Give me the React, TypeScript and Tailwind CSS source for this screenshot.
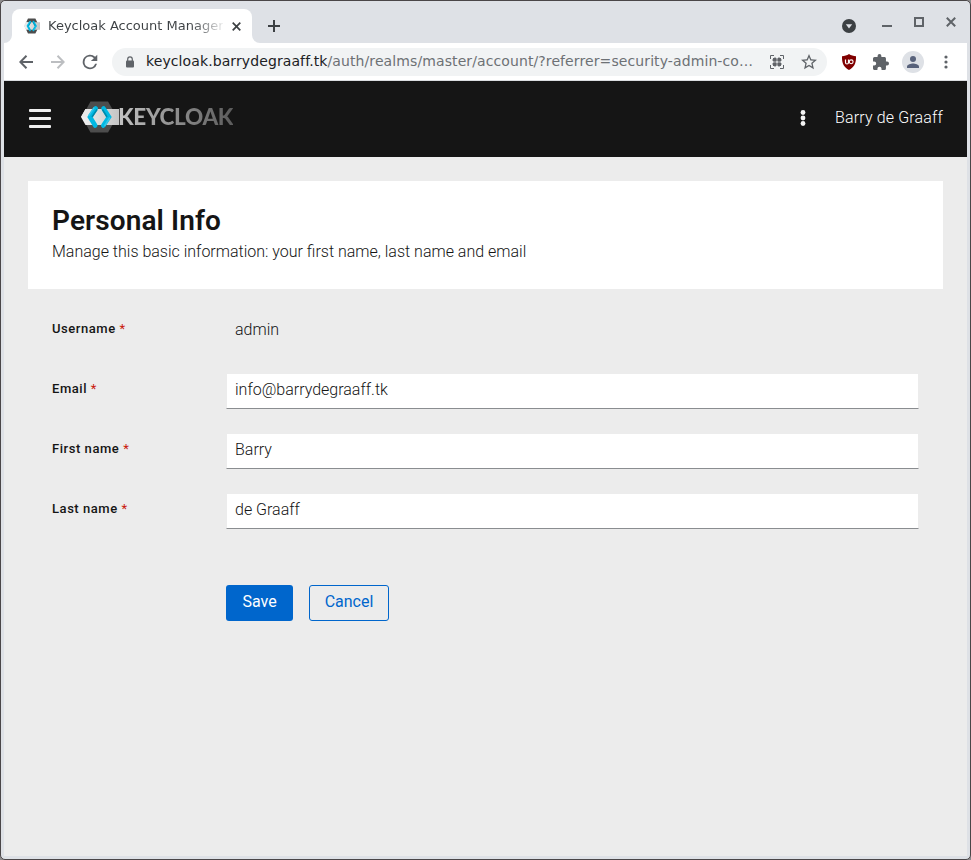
import React from "react";

function KeycloakMark({ className }: { className: string }) {
  return (
    <svg className={className} viewBox="0 0 38 32">
      <defs>
        <linearGradient id="band" x1="0" x2="1">
          <stop offset="0" stopColor="#f2f2f2" />
          <stop offset="1" stopColor="#c4c4c4" />
        </linearGradient>
      </defs>
      <path d="M9.5 0.5h17.5l9 15.5-9 15.5H9.5L1 16z" fill="#4d4d4d" />
      <path d="M4.5 8H38v16H4.5L0 16z" fill="url(#band)" />
      <path d="M4.5 8H12L7.500 16H0z" fill="#e9e9e9" />
      <path d="M14.700 7.500L9 16l5.200 8.500" stroke="#00b8e3" strokeWidth="4.600" strokeLinecap="round" fill="none" />
      <path d="M13.200 6.500L7.500 15" stroke="#33c6e9" strokeWidth="1.500" fill="none" />
      <path d="M16 8.500L11 16" stroke="#008aaa" strokeWidth="1.500" fill="none" />
      <path d="M22.500 7.500L28 16l-5.700 8.500" stroke="#00b8e3" strokeWidth="4.600" strokeLinecap="round" fill="none" />
      <path d="M21.500 8.500L26 16" stroke="#008aaa" strokeWidth="1.500" fill="none" />
      <path d="M29 16.500L23.500 25" stroke="#33c6e9" strokeWidth="1.500" fill="none" />
    </svg>
  );
}

function TabStrip() {
  return (
    <div className="flex h-[42px] items-end bg-[#dee1e6]">
      <svg className="h-2 w-2" viewBox="0 0 8 8"><path d="M8 0v8H0a8 8 0 0 0 8-8z" fill="#fff" /></svg>
      <div className="flex h-[34px] w-[240px] items-center rounded-t-lg bg-white pl-3">
        <KeycloakMark className="h-4 w-4 shrink-0 scale-y-115" />
        <div className="ml-2 w-[175px] whitespace-nowrap bg-linear-to-r from-[#3c4043] from-82% to-[#3c4043]/10 bg-clip-text font-['DejaVu_Sans',sans-serif] text-[13px] leading-5 text-transparent">
          Keycloak Account Manager
        </div>
        <svg className="ml-[9px] h-[9px] w-[9px] shrink-0" viewBox="0 0 9 9"><path d="M.7.7l7.600 7.600M8.300.7L.7 8.300" stroke="#3c4043" strokeWidth="1.700" /></svg>
      </div>
      <svg className="h-2 w-2" viewBox="0 0 8 8"><path d="M0 0v8h8a8 8 0 0 1-8-8z" fill="#fff" /></svg>
      <svg className="mb-[11px] ml-2 h-3 w-3" viewBox="0 0 12 12"><path d="M6 0v12M0 6h12" stroke="#3c4043" strokeWidth="2" /></svg>
      <div className="ml-auto flex h-full">
        <svg className="mt-[18px] h-[14px] w-[14px]" viewBox="0 0 14 14"><circle cx="7" cy="7" r="7" fill="#3c4043" /><path d="M3.800 5.200h6.400L7 9.600z" fill="#dee1e6" /></svg>
        <div className="ml-[26px] mt-[24px] h-[2px] w-[10px] bg-[#5f6368]" />
        <div className="ml-[22px] mt-4 h-[10px] w-[10px] border-2 border-[#5f6368]" />
        <svg className="ml-[22px] mr-[11px] mt-4 h-[10px] w-[10px]" viewBox="0 0 10 10"><path d="M.8.8l8.400 8.400M9.200.8L.8 9.200" stroke="#5f6368" strokeWidth="2" /></svg>
      </div>
    </div>
  );
}

function Toolbar() {
  return (
    <div className="flex h-[37px] items-center bg-white">
      <svg className="ml-[15px] h-[14px] w-[14px]" viewBox="0 0 14 14"><path d="M14 7H1.500M7.500.8L1.300 7l6.200 6.200" stroke="#5f6368" strokeWidth="2" fill="none" /></svg>
      <svg className="ml-[18px] h-[14px] w-[14px]" viewBox="0 0 14 14"><path d="M0 7h12.500M6.500.8L12.700 7l-6.200 6.200" stroke="#bcbec1" strokeWidth="2" fill="none" /></svg>
      <svg className="ml-[13px] h-[24px] w-[24px] p-[2px]" viewBox="1 1 22 22"><path d="M17.650 6.350A8 8 0 1 0 19.730 14h-2.080A6 6 0 1 1 12 6c1.660 0 3.140.69 4.220 1.780L13 11h7V4z" fill="#5f6368" /></svg>
      <div className="ml-[10px] flex h-7 w-[715px] items-center rounded-full bg-[#f1f3f4]">
        <svg className="ml-[14px] h-3 w-2" viewBox="0 0 8 12"><rect y="4.500" width="8" height="7" rx="1" fill="#5f6368" /><path d="M1.700 5V3.200a2.300 2.300 0 0 1 4.600 0V5" stroke="#5f6368" strokeWidth="1.200" fill="none" /></svg>
        <div className="ml-3 w-[611px] whitespace-nowrap font-['DejaVu_Sans',sans-serif] text-[14px] tracking-[0.1px] text-[#6d7175]">
          <span className="text-[#202124]">keycloak.barrydegraaff.tk</span>/auth/realms/master/account/?referrer=security-admin-co…
        </div>
        <svg className="ml-[13px] h-[14px] w-[14px]" viewBox="0 0 14 14"><path d="M.5 4V.5H4M10 .5h3.500V4M13.500 10v3.500H10M4 13.500H.5V10" stroke="#5f6368" fill="none" /><path d="M3 3h3.500v3.500H3zM7.500 3H11v3.500H7.500zM3 7.500h3.500V11H3zM7.500 7.500H11V11H7.500z" fill="#5f6368" /><path d="M2 5h10M2 9h10M5 2v10M9 2v10" stroke="#5f6368" strokeWidth=".8" /></svg>
        <svg className="ml-[17px] h-4 w-4" viewBox="2 2 20 20"><path d="M22 9.240l-7.190-.62L12 2 9.190 8.630 2 9.240l5.460 4.730L5.820 21 12 17.270 18.180 21l-1.630-7.030zM12 15.400l-3.760 2.270 1-4.280-3.320-2.880 4.380-.38L12 6.100l1.710 4.040 4.380.38-3.320 2.880 1 4.280z" fill="#5f6368" /></svg>
      </div>
      <svg className="ml-[15px] h-4 w-[14px]" viewBox="0 0 14 16"><path d="M7 0c2 1.500 4.500 2.100 7 2.200C14.200 9 12.500 12.800 7 16 1.500 12.800-.2 9 0 2.200 2.500 2.100 5 1.500 7 0z" fill="#800000" /><path d="M3.500 5.500v3q0 1.500 1.500 1.500t1.500-1.500v-3" stroke="#fff" strokeWidth="1.200" fill="none" /><circle cx="9.200" cy="7.800" r="1.900" stroke="#fff" strokeWidth="1.100" fill="none" /></svg>
      <svg className="ml-[17px] h-4 w-4" viewBox="2 1 21 21"><path d="M20.500 11H19V7c0-1.100-.9-2-2-2h-4V3.500a2.500 2.500 0 0 0-5 0V5H4a2 2 0 0 0-2 2v3.800h1.500a2.700 2.700 0 0 1 0 5.400H2V20c0 1.100.9 2 2 2h3.800v-1.500a2.700 2.700 0 0 1 5.400 0V22H17a2 2 0 0 0 2-2v-4h1.500a2.500 2.500 0 0 0 0-5z" fill="#5f6368" /></svg>
      <svg className="ml-[13px] h-[22px] w-[22px]" viewBox="0 0 22 22"><circle cx="11" cy="11" r="11" fill="#dee1e6" /><circle cx="11" cy="8" r="3" fill="#58627b" /><path d="M5 17v-1.500C5 13.500 9 12.500 11 12.500s6 1 6 3V17z" fill="#58627b" /></svg>
      <svg className="ml-5 h-[14px] w-1" viewBox="0 0 4 14"><g fill="#5f6368"><circle cx="2" cy="2" r="1.600" /><circle cx="2" cy="7" r="1.600" /><circle cx="2" cy="12" r="1.600" /></g></svg>
    </div>
  );
}

function Masthead() {
  return (
    <header className="flex h-[76px] items-center bg-[#151515] pb-[2px] pl-[25px] pr-6">
      <div className="flex w-[22px] flex-col gap-[5px]">
        <div className="h-[3px] rounded-[1px] bg-[#f0f0f0]" />
        <div className="h-[3px] rounded-[1px] bg-[#f0f0f0]" />
        <div className="h-[3px] rounded-[1px] bg-[#f0f0f0]" />
      </div>
      <div className="ml-[30px] flex h-8 -translate-y-px items-center">
        <KeycloakMark className="h-8 w-[38px]" />
        <span className="-ml-px bg-linear-to-r from-[#c4c4c4] to-[#5c5c5c] bg-clip-text font-['Lato',sans-serif] text-[22.500px] leading-8 font-black tracking-[-0.300px] text-transparent">KEYCLOAK</span>
      </div>
      <svg className="ml-auto h-4 w-[6px]" viewBox="0 0 6 16"><g fill="#f4f4f4"><circle cx="3" cy="2.500" r="2.400" /><circle cx="3" cy="8" r="2.400" /><circle cx="3" cy="13.500" r="2.400" /></g></svg>
      <span className="ml-[29px] w-[108px] whitespace-nowrap font-['Roboto',sans-serif] text-[16px] font-light tracking-[0.150px] text-white">Barry de Graaff</span>
    </header>
  );
}

const fields = [
  { label: "Email", value: "info@barrydegraaff.tk" },
  { label: "First name", value: "Barry" },
  { label: "Last name", value: "de Graaff" },
];

function Label({ text }: { text: string }) {
  return (
    <div className="w-[174px] pt-[5px] text-[13px] leading-5 font-medium tracking-[0.550px]">
      {text} <span className="font-normal text-[#c9190b]">*</span>
    </div>
  );
}

export default function App() {
  return (
    <div className="h-[860px] w-[971px] overflow-hidden bg-[#8d8b8c]">
      <div className="flex h-full flex-col rounded-[5px] border border-[#4a4648] bg-[#dee1e6] px-[3px] pb-[3px]">
        <TabStrip />
        <Toolbar />
        <div className="h-px shrink-0 bg-[#dadce0]" />
        <Masthead />
        <main className="flex-1 bg-[#ececec] px-6 pt-6 font-['Roboto',sans-serif] text-[#151515]">
          <section className="h-[108px] bg-white px-6 pt-[22px]">
            <h1 className="text-[28px] leading-9 font-semibold tracking-[0.100px]">Personal Info</h1>
            <p className="pt-px text-[16px] leading-6 font-light">Manage this basic information: your first name, last name and email</p>
          </section>
          <form className="pl-6 pr-6 pt-[25px]">
            <div className="flex h-[60px]">
              <Label text="Username" />
              <div className="pl-[9px] pt-1 text-[16px] leading-6 font-light">admin</div>
            </div>
            {fields.map((field) => (
              <div key={field.label} className="flex h-[60px]">
                <Label text={field.label} />
                <div className="h-[35px] flex-1 border border-[#ececec] border-t-0 border-b-[#8a8d90] bg-white pl-2 pt-1 text-[16px] leading-6 font-light">{field.value}</div>
              </div>
            ))}
            <div className="flex gap-4 pl-[174px] pt-[31px]">
              <button type="button" className="h-9 w-[67px] rounded-[3px] bg-[#0066cc] pb-[2px] text-[16px] text-white">Save</button>
              <button type="button" className="h-9 w-20 rounded-[3px] border border-[#0066cc] pb-[2px] text-[16px] text-[#0066cc]">Cancel</button>
            </div>
          </form>
        </main>
      </div>
    </div>
  );
}
